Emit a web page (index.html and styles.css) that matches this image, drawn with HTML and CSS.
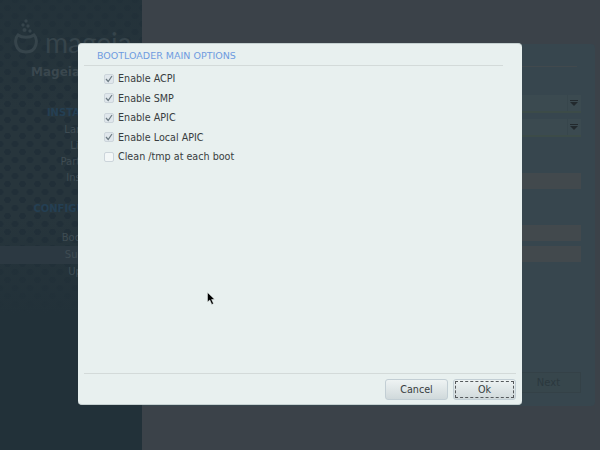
FILE: index.html
```html
<!DOCTYPE html>
<html>
  <head>
    <title>Bootloader Main Options</title>
    <link rel="stylesheet" href="styles.css">
  </head>

  <body>
    <div class="screen">
      <div class="sidebar">
        <div class="logo">
          <svg class="logo-mark" width="26" height="36" viewBox="0 0 26 36">
            <circle cx="13" cy="3" r="1.700"></circle>
            <circle cx="10" cy="7" r="1.700"></circle>
            <circle cx="15" cy="8" r="1.700"></circle>
            <circle cx="11.500" cy="12" r="2"></circle>
            <circle cx="17" cy="13" r="1.700"></circle>
            <path d="M5 17 C1 21 1.500 34 13 34 C24.500 34 25 21 21 17 C17 20 9 20 5 17 Z"></path>
          </svg>
          <span class="logo-text">mageia</span>
        </div>
        <div class="side-title">Mageia 5</div>
        <div class="side-list">
          <div class="side-head">INSTALLATION</div>
          <div class="side-item">Language</div>
          <div class="side-item">License</div>
          <div class="side-item">Partitioning</div>
          <div class="side-item">Installing</div>
          <div class="side-head side-head-two">CONFIGURATION</div>
          <div class="side-item side-boot">Bootloader</div>
        </div>
        <div class="side-active"><span>Summary</span></div>
        <div class="side-list">
          <div class="side-item side-last">Updates</div>
        </div>
      </div>
      <div class="main">
        <div class="panel">
          <div class="panel-line"></div>
          <div class="combo"><span class="combo-arrow"></span></div>
          <div class="combo"><span class="combo-arrow"></span></div>
          <div class="field field-one"></div>
          <div class="field field-two"></div>
          <div class="field field-three"></div>
          <div class="panel-next"><span class="next-btn">Next</span></div>
        </div>
      </div>
    </div>

    <div class="dialog">
      <div class="dialog-title">BOOTLOADER MAIN OPTIONS</div>
      <div class="options">
        <label class="option"><span class="check checked"><svg width="8" height="8" viewBox="0 0 8 8"><path d="M1 4 L3.200 6.500 L7 1"></path></svg></span>Enable ACPI</label>
        <label class="option"><span class="check checked"><svg width="8" height="8" viewBox="0 0 8 8"><path d="M1 4 L3.200 6.500 L7 1"></path></svg></span>Enable SMP</label>
        <label class="option"><span class="check checked"><svg width="8" height="8" viewBox="0 0 8 8"><path d="M1 4 L3.200 6.500 L7 1"></path></svg></span>Enable APIC</label>
        <label class="option"><span class="check checked"><svg width="8" height="8" viewBox="0 0 8 8"><path d="M1 4 L3.200 6.500 L7 1"></path></svg></span>Enable Local APIC</label>
        <label class="option"><span class="check"></span>Clean /tmp at each boot</label>
      </div>
      <div class="dialog-footer">
        <button type="button" class="btn">Cancel</button>
        <button type="button" class="btn btn-default"><span class="btn-focus">Ok</span></button>
      </div>
    </div>

    <svg class="cursor" width="10" height="14" viewBox="0 0 10 14">
      <path d="M0.500 0.500 L0.500 10 L2.800 8 L4.800 12.500 L6.500 11.600 L4.600 7.500 L7.500 7.300 Z"></path>
    </svg>
  </body>

</html>
```

FILE: styles.css
```css
html,
body {
  margin: 0;
  height: 100%;
}

body {
  position: relative;
  width: 600px;
  height: 450px;
  overflow: hidden;
  font-family: "DejaVu Sans", sans-serif;
  background-color: #3b4249;
}

.screen {
  display: flex;
  height: 450px;
}

.sidebar {
  width: 142px;
  flex: none;
  box-sizing: border-box;
  padding-top: 25px;
  background-color: #27353c;
  background-image:
    linear-gradient(rgba(34, 49, 57, 0.7), rgba(34, 49, 57, 0) 25%, rgba(34, 49, 57, 0) 48%, #223139 70%),
    radial-gradient(circle, #212f38 3px, transparent 3.5px),
    radial-gradient(circle, #212f38 3px, transparent 3.5px);
  background-size: 100% 100%, 15px 16px, 15px 16px;
  background-position: 0 0, 0 0, 7.5px 8px;
  color: #3f4c53;
  font-size: 10px;
}

.logo {
  display: flex;
  align-items: flex-end;
  height: 32px;
  padding-left: 13px;
}

.logo-mark {
  flex: none;
  margin-bottom: 3px;
}

.logo-mark circle {
  fill: #36444b;
}

.logo-mark path {
  fill: none;
  stroke: #36444b;
  stroke-width: 3;
}

.logo-text {
  font-family: "Lato", sans-serif;
  font-size: 28px;
  line-height: 30px;
  margin-left: 6px;
  color: #36444b;
}

.side-title {
  margin-top: 7px;
  padding-left: 31px;
  font-size: 12px;
  line-height: 16px;
  font-weight: bold;
  color: #3a474e;
}

.side-list {
  padding-left: 36px;
  text-align: center;
}

.side-head {
  margin-top: 25px;
  margin-bottom: 1px;
  margin-left: -4px;
  line-height: 16px;
  font-weight: bold;
  color: #243f53;
}

.side-head-two {
  margin-top: 15px;
  margin-left: -18px;
}

.side-item {
  line-height: 16px;
}

.side-boot {
  margin-top: 13px;
}

.side-active {
  padding-left: 36px;
  text-align: center;
  line-height: 18px;
  background-color: #2c3942;
}

.side-last {
  line-height: 15px;
}

.main {
  flex: 1;
  padding-top: 44px;
}

.panel {
  width: 453px;
  height: 362px;
  box-sizing: border-box;
  padding: 22px 14px 0 0;
  background-color: #37464e;
  border-radius: 0 4px 4px 0;
}

.panel-line {
  height: 1px;
  margin-bottom: 28px;
  margin-right: 4px;
  background-color: #41494d;
}

.combo {
  position: relative;
  height: 18px;
  margin-bottom: 6px;
  background-color: #3b4a50;
  border-bottom: 2px solid #3c4b48;
  box-sizing: border-box;
}

.combo-arrow {
  position: absolute;
  right: 3px;
  top: 7px;
  width: 0;
  height: 0;
  border-left: 4px solid transparent;
  border-right: 4px solid transparent;
  border-top: 4px solid #22292d;
}

.combo-arrow::before {
  content: "";
  position: absolute;
  left: -4px;
  top: -6px;
  width: 8px;
  height: 1px;
  background-color: #22292d;
}

.combo-arrow::after {
  content: "";
  position: absolute;
  left: -7px;
  top: -11px;
  width: 1px;
  height: 16px;
  background-color: #37464c;
}

.field {
  height: 16px;
  background-color: #42494d;
}

.field-one {
  margin-top: 36px;
}

.field-two {
  margin-top: 36px;
}

.field-three {
  margin-top: 5px;
}

.panel-next {
  display: flex;
  justify-content: flex-end;
  margin-top: 110px;
}

.next-btn {
  width: 63px;
  height: 19px;
  line-height: 19px;
  text-align: center;
  font-size: 10px;
  color: #2b383e;
  background-color: #37464c;
  border: 1px solid #344147;
}

/* modal on top of the installer */
.dialog {
  position: absolute;
  left: 78px;
  top: 43px;
  width: 444px;
  height: 362px;
  box-sizing: border-box;
  display: flex;
  flex-direction: column;
  background-color: #e8f0ef;
  border-radius: 4px;
  border: 1px solid #c5d0d0;
  border-width: 1px 0 1px 0;
  padding: 5px 6px 4px 6px;
}

.dialog-title {
  margin-right: 13px;
  padding-left: 13px;
  height: 16px;
  line-height: 14px;
  font-size: 9.500px;
  color: #6e9be0;
  border-bottom: 1px solid #d3dad9;
}

.options {
  flex: 1;
  padding: 3px 0 0 20px;
}

.option {
  display: flex;
  align-items: center;
  height: 19.500px;
  font-size: 9.600px;
  color: #383d40;
}

.check {
  display: flex;
  align-items: center;
  justify-content: center;
  width: 10px;
  height: 10px;
  box-sizing: border-box;
  margin-right: 4px;
  background-color: #f3f7f7;
  border: 1px solid #ccd5db;
  border-radius: 2px;
}

.checked {
  background-color: #e0e7ec;
}

.check svg path {
  fill: none;
  stroke: #6b7a82;
  stroke-width: 1.200;
}

.dialog-footer {
  display: flex;
  justify-content: flex-end;
  gap: 5px;
  padding-top: 5px;
  box-sizing: border-box;
  height: 27px;
  border-top: 1px solid #d3dad9;
}

.btn {
  width: 63px;
  height: 21px;
  padding: 0;
  font-family: "DejaVu Sans", sans-serif;
  font-size: 9.600px;
  color: #383d40;
  background: linear-gradient(#eef3f3, #d0d9db);
  border: 1px solid #c2ced4;
  border-radius: 3px;
}

.btn-default {
  padding: 1px;
}

.btn-focus {
  display: block;
  height: 100%;
  line-height: 15px;
  box-sizing: border-box;
  border: 1px dashed #55595c;
}

.cursor {
  position: absolute;
  left: 207px;
  top: 292px;
}

.cursor path {
  fill: #000;
  stroke: #e8f0ef;
  stroke-width: 0.500;
}
```
